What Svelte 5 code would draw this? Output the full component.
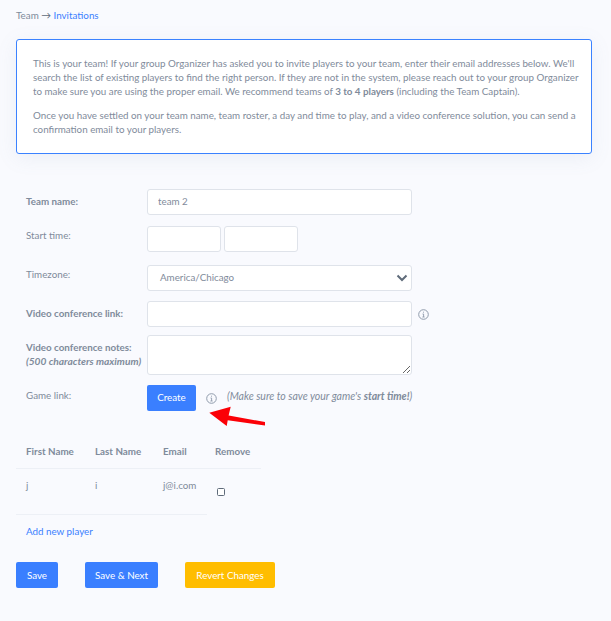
<script lang="ts">
  let teamName = $state('team 2')
  const players = [{ first: 'j', last: 'i', email: 'j@i.com' }]
</script>

<main class="page">
  <nav class="crumbs">Team <span class="sep">→</span> <a href="#invitations">Invitations</a></nav>

  <section class="panel">
    <p>This is your team! If your group Organizer has asked you to invite players to your team, enter their email addresses below. We'll search the list of existing players to find the right person. If they are not in the system, please reach out to your group Organizer to make sure you are using the proper email. We recommend teams of <strong>3 to 4 players</strong> (including the Team Captain).</p>
    <p>Once you have settled on your team name, team roster, a day and time to play, and a video conference solution, you can send a confirmation email to your players.</p>
  </section>

  <form class="form">
    <div class="row r-name">
      <label for="team" class="strong">Team name:</label>
      <input id="team" class="wide" bind:value={teamName} />
    </div>
    <div class="row r-start">
      <label for="start">Start time:</label>
      <input id="start" class="short" />
      <input class="short" aria-label="Start hour" />
    </div>
    <div class="row r-zone">
      <label for="zone">Timezone:</label>
      <div class="select wide" id="zone">
        America/Chicago
        <svg width="12" height="8" viewBox="0 0 12 8"><path d="M1.5 1.5 6 6l4.5-4.5" fill="none" stroke="#5f6b7a" stroke-width="2"/></svg>
      </div>
    </div>
    <div class="row r-link">
      <label for="link" class="strong">Video conference link:</label>
      <input id="link" class="wide" />
      <svg class="info" width="11" height="11" viewBox="0 0 11 11"><circle cx="5.5" cy="5.5" r="4.8" fill="none" stroke="#8f9bab"/><path d="M4.5 5h1.1v3M4.4 8h2.2M5.5 2.7v1" fill="none" stroke="#8f9bab" stroke-width=".9"/></svg>
    </div>
    <div class="row r-notes">
      <label for="notes" class="strong">Video conference notes:<br /><em>(500 characters maximum)</em></label>
      <textarea id="notes" class="wide"></textarea>
    </div>
    <div class="row r-game">
      <span class="label">Game link:</span>
      <button type="button" class="btn create">Create</button>
      <svg class="info game-info" width="11" height="11" viewBox="0 0 11 11"><circle cx="5.5" cy="5.5" r="4.8" fill="none" stroke="#8f9bab"/><path d="M4.5 5h1.1v3M4.4 8h2.2M5.5 2.7v1" fill="none" stroke="#8f9bab" stroke-width=".9"/></svg>
      <span class="hint">(Make sure to save your game's <strong>start time!</strong>)</span>
    </div>
  </form>

  <table class="players">
    <thead>
      <tr>
        <th class="c1">First Name</th>
        <th class="c2">Last Name</th>
        <th class="c3">Email</th>
        <th class="c4">Remove</th>
      </tr>
    </thead>
    <tbody>
      {#each players as p}
        <tr>
          <td>{p.first}</td>
          <td>{p.last}</td>
          <td>{p.email}</td>
          <td class="check"><input type="checkbox" aria-label="Remove" /></td>
        </tr>
      {/each}
    </tbody>
  </table>
  <div class="rule"></div>

  <a class="add" href="#add">Add new player</a>

  <div class="actions">
    <button type="button" class="btn save">Save</button>
    <button type="button" class="btn next">Save &amp; Next</button>
    <button type="button" class="btn amber">Revert Changes</button>
  </div>

  <!-- annotation drawn over the screenshot -->
  <svg class="arrow" width="60" height="24" viewBox="0 0 60 24">
    <path d="M0.3 6.7 21.7 0.7 19.5 10 17.7 20z" fill="#fb0007"/>
    <path d="M17 9 56 16 56 19.5 17 14z" fill="#fb0007"/>
  </svg>
</main>

<style>
  :global(body) {
    margin: 0;
    background: #f9fafe;
  }

  .page {
    position: relative;
    box-sizing: border-box;
    width: 611px;
    height: 621px;
    padding: 9px 19px 0 16px;
    overflow: hidden;
    font-family: Lato, "Noto Sans", sans-serif;
    font-size: 9.8px;
    line-height: 14px;
    color: #7f8b9b;
  }

  a {
    color: #3a7fff;
    text-decoration: none;
  }

  .crumbs {
    height: 12px;
    line-height: 12px;
    color: #7f8b9b;
  }

  .sep {
    color: #5f6b7a;
  }

  .panel {
    box-sizing: border-box;
    height: 115px;
    margin-top: 18px;
    padding: 16px 8px 0 16px;
    background: #fff;
    border: 1px solid #3b82ff;
    border-radius: 3px;
    box-shadow: 0 4px 20px rgba(120, 135, 170, 0.1);
  }

  .panel p {
    margin: 0 0 9.5px;
  }

  strong {
    font-weight: 700;
  }

  .form {
    margin-top: 35px;
    padding-left: 10px;
  }

  .row {
    display: flex;
    align-items: flex-start;
  }

  .row label,
  .label {
    flex: none;
    width: 121px;
    padding-top: 5px;
  }

  .strong {
    font-weight: 700;
  }

  em {
    font-style: italic;
    font-size: 10.2px;
  }

  input,
  textarea,
  .select {
    box-sizing: border-box;
    height: 26px;
    margin: 0;
    padding: 0 10px 2px;
    background: #fff;
    border: 1px solid #dfe3ea;
    border-radius: 3px;
    font: inherit;
    color: #7f8b9b;
    outline: none;
  }

  .wide {
    flex: none;
    width: 265px;
  }

  .short {
    flex: none;
    width: 74px;
    margin-right: 3px;
  }

  .select {
    display: flex;
    align-items: center;
    justify-content: space-between;
    padding: 0 3px 2px 12px;
    line-height: 22px;
  }

  .select svg {
    margin-top: 2px;
  }

  .r-start { margin-top: 11px; }
  .r-zone { margin-top: 13px; }
  .r-zone label { padding-top: 2px; }
  .r-start label { padding-top: 2px; }
  .r-link { margin-top: 10px; }
  .r-link label { padding-top: 5px; }
  .r-notes { margin-top: 8px; }
  .r-notes label { padding-top: 5px; }
  .r-game { margin-top: 10px; }
  .r-game .label { padding-top: 3px; }

  textarea {
    display: block;
    height: 40px;
    resize: vertical;
  }

  .info {
    flex: none;
    margin: 8px 0 0 6px;
  }

  .btn {
    flex: none;
    box-sizing: border-box;
    height: 26px;
    padding: 0;
    background: #3a7fff;
    border: 0;
    border-radius: 2px;
    font: inherit;
    color: #fff;
  }

  .create {
    width: 49px;
    padding-bottom: 2px;
  }

  .save { width: 42px; }
  .next { width: 73px; }

  .amber {
    width: 90px;
    background: #ffbd00;
  }

  .game-info {
    margin: 8px 0 0 10px;
  }

  .hint {
    margin: 4px 0 0 10px;
    font-size: 10.5px;
    font-style: italic;
    white-space: nowrap;
  }

  .players {
    margin-top: 24px;
    border-collapse: collapse;
  }

  .players th {
    height: 33px;
    padding: 0 0 0 10px;
    box-sizing: border-box;
    text-align: left;
    font-weight: 700;
    border-bottom: 1px solid #edf0f6;
  }

  .players td {
    height: 46px;
    box-sizing: border-box;
    padding: 9px 0 0 10px;
    vertical-align: top;
  }

  .c1 { width: 69px; }
  .c2 { width: 68px; }
  .c3 { width: 52px; }
  .c4 { width: 56px; }

  .players td.check {
    padding: 19px 0 0 12px;
    line-height: 0;
  }

  .check input {
    width: 8px;
    height: 8px;
    margin: 0;
    padding: 0;
    appearance: none;
    background: #fff;
    border: 1px solid #5f6b7a;
    border-radius: 1.5px;
  }

  .rule {
    width: 191px;
    height: 1px;
    background: #edf0f6;
  }

  .add {
    display: block;
    margin: 9px 0 0 10px;
  }

  .actions {
    display: flex;
    gap: 27px;
    margin-top: 24px;
  }

  .arrow {
    position: absolute;
    left: 209px;
    top: 406px;
  }
</style>
